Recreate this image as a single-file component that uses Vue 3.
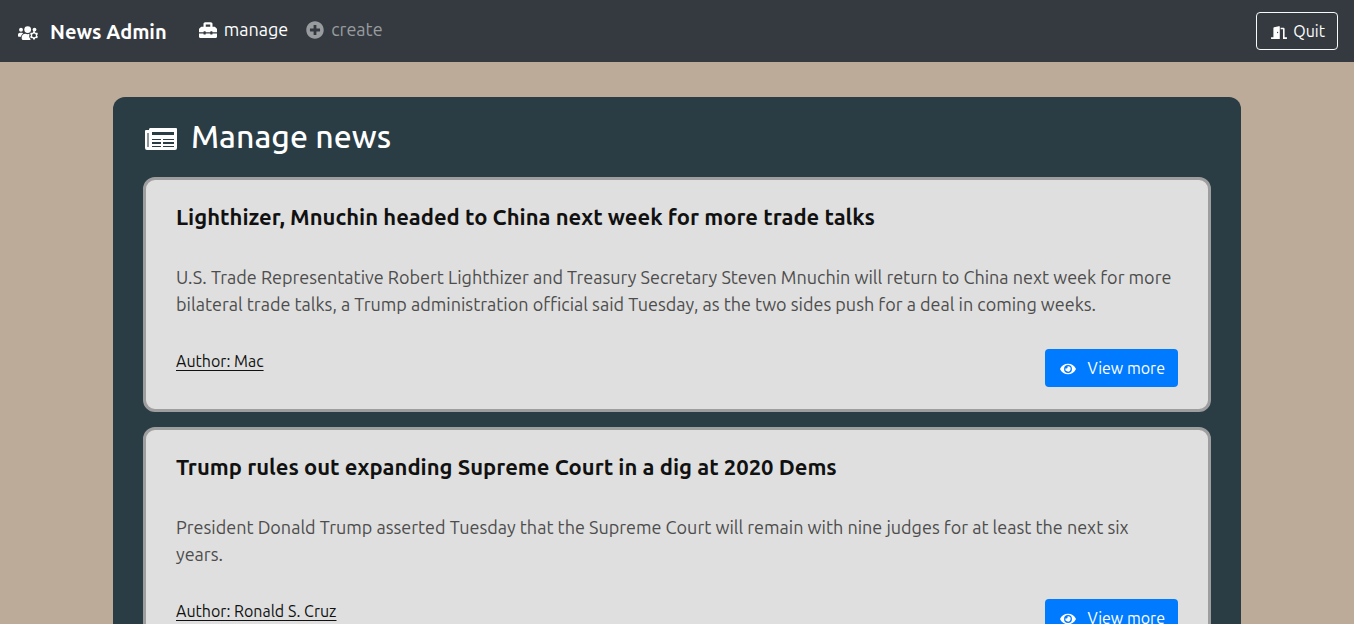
<script setup>
const articles = [
  {
    id: 1,
    title: 'Lighthizer, Mnuchin headed to China next week for more trade talks',
    text: 'U.S. Trade Representative Robert Lighthizer and Treasury Secretary Steven Mnuchin will return to China next week for more bilateral trade talks, a Trump administration official said Tuesday, as the two sides push for a deal in coming weeks.',
    author: 'Mac',
  },
  {
    id: 2,
    title: 'Trump rules out expanding Supreme Court in a dig at 2020 Dems',
    text: 'President Donald Trump asserted Tuesday that the Supreme Court will remain with nine judges for at least the next six years.',
    author: 'Ronald S. Cruz',
  },
]
</script>

<template>
  <div class="page">
    <header class="navbar">
      <a class="brand" href="#">
        <svg class="icon-users" viewBox="0 0 640 448" aria-hidden="true">
          <circle cx="96" cy="120" r="62" />
          <circle cx="310" cy="112" r="108" />
          <circle cx="528" cy="112" r="60" />
          <path d="M64 216h64c18 0 34 7 45 19-40 22-69 62-75 109H32c-18 0-32-14-32-32v-32c0-35 29-64 64-64z" />
          <path d="M233 250h8c42 20 86 20 128 0l-6 40-4 60 30 60 14 38H166c-26 0-48-22-48-48v-35c0-64 51-115 115-115z" />
          <path fill-rule="evenodd" d="M484 170h56l10 38 24 12 38-12 26 46-26 30v32l26 30-26 46-38-12-24 12-10 38h-56l-10-38-24-12-38 12-26-46 26-30v-32l-26-30 26-46 38 12 24-12zM512 238a62 62 0 1 0 0 124 62 62 0 1 0 0-124z" />
        </svg>
        <span>News Admin</span>
      </a>
      <nav class="links">
        <a class="link active" href="#manage">
          <svg class="icon-nav" viewBox="0 0 512 512" aria-hidden="true"><path d="M502.63 214.63l-45.25-45.25c-6-6-14.14-9.37-22.63-9.37H384V80c0-26.51-21.49-48-48-48H176c-26.51 0-48 21.49-48 48v80H77.25c-8.49 0-16.62 3.37-22.63 9.37L9.37 214.63c-6 6-9.37 14.14-9.37 22.63V320h128v-16c0-8.84 7.16-16 16-16h32c8.84 0 16 7.16 16 16v16h128v-16c0-8.84 7.16-16 16-16h32c8.84 0 16 7.16 16 16v16h128v-82.75c0-8.48-3.37-16.62-9.37-22.62zM320 160H192V96h128v64zm64 208c0 8.84-7.16 16-16 16h-32c-8.84 0-16-7.16-16-16v-16H192v16c0 8.84-7.16 16-16 16h-32c-8.84 0-16-7.16-16-16v-16H0v96c0 17.67 14.33 32 32 32h448c17.67 0 32-14.33 32-32v-96H384v16z" /></svg>
          <span>manage</span>
        </a>
        <a class="link" href="#create">
          <svg class="icon-nav" viewBox="0 0 512 512" aria-hidden="true"><path d="M256 8C119 8 8 119 8 256s111 248 248 248 248-111 248-248S393 8 256 8zm144 276c0 6.6-5.4 12-12 12h-92v92c0 6.6-5.4 12-12 12h-56c-6.6 0-12-5.4-12-12v-92h-92c-6.6 0-12-5.4-12-12v-56c0-6.6 5.4-12 12-12h92v-92c0-6.6 5.4-12 12-12h56c6.6 0 12 5.4 12 12v92h92c6.6 0 12 5.4 12 12v56z" /></svg>
          <span>create</span>
        </a>
      </nav>
      <button class="quit" type="button">
        <svg class="icon-door" viewBox="0 0 640 512" aria-hidden="true"><path d="M624 448h-80V113.45C544 86.19 522.47 64 496 64H384v64h96v384h144c8.84 0 16-7.16 16-16v-32c0-8.84-7.16-16-16-16zM312.24 1.01l-192 49.74C105.99 54.44 96 67.7 96 82.92V448H16c-8.84 0-16 7.16-16 16v32c0 8.84 7.16 16 16 16h336V33.18c0-21.58-19.56-37.41-39.76-32.17zM264 288c-13.25 0-24-14.33-24-32s10.75-32 24-32 24 14.33 24 32-10.75 32-24 32z" /></svg>
        <span>Quit</span>
      </button>
    </header>

    <main class="panel">
      <h1 class="heading">
        <svg class="icon-news" viewBox="0 0 32 24" aria-hidden="true">
          <path fill-rule="evenodd" d="M5 2h26a1 1 0 0 1 1 1v19a2 2 0 0 1-2 2H2a2 2 0 0 1-2-2V5a1 1 0 0 1 1-1h3a2 2 0 0 1 1-2zM7 6v3h22V6z" />
          <path class="slot" d="M7 13h9v1H7zM18 13h11v1H18zM7 16h9v2H7zM18 16h11v2H18zM7 20h9v1H7zM18 20h11v1H18z" />
          <path class="fold" d="M2 7h2v14H2z" />
        </svg>
        <span>Manage news</span>
      </h1>

      <article v-for="item in articles" :key="item.id" class="card">
        <h2 class="title">{{ item.title }}</h2>
        <p class="text">{{ item.text }}</p>
        <div class="footer">
          <span class="author">Author: {{ item.author }}</span>
          <button class="view" type="button">
            <svg class="icon-eye" viewBox="0 0 576 512" aria-hidden="true"><path d="M572.52 241.4C518.29 135.59 410.93 64 288 64S57.68 135.64 3.48 241.41a32.35 32.35 0 0 0 0 29.19C57.71 376.41 165.07 448 288 448s230.32-71.64 284.52-177.41a32.35 32.35 0 0 0 0-29.19zM288 400a144 144 0 1 1 144-144 143.93 143.93 0 0 1-144 144zm0-240a95.31 95.31 0 0 0-25.31 3.79 47.85 47.85 0 0 1-66.9 66.9A95.78 95.78 0 1 0 288 160z" /></svg>
            <span>View more</span>
          </button>
        </div>
      </article>
    </main>
  </div>
</template>

<style>
body {
  margin: 0;
  background: #bcab99;
}
html {
  scrollbar-width: none;
}
</style>

<style scoped>
.page {
  font-family: Ubuntu, "Noto Sans", sans-serif;
  font-size: 16px;
  line-height: 24px;
}
.page * {
  box-sizing: border-box;
}
svg {
  fill: currentColor;
  flex: none;
}
.navbar {
  display: flex;
  align-items: center;
  height: 62px;
  padding: 0 16px;
  background: #343a40;
  color: #fff;
}
.brand {
  display: flex;
  align-items: center;
  gap: 12px;
  margin-right: 32px;
  padding: 2px 0 0 2px;
  color: #fff;
  font-size: 20px;
  font-weight: 700;
  text-decoration: none;
}
.icon-users {
  width: 20px;
  height: 14px;
  margin-top: 2px;
}
.links {
  display: flex;
  gap: 18px;
  padding-bottom: 4px;
}
.link {
  display: flex;
  align-items: center;
  gap: 7px;
  color: #999c9f;
  font-size: 18px;
  text-decoration: none;
}
.link.active {
  color: #fff;
}
.icon-nav {
  width: 18px;
  height: 18px;
  margin-top: 2px;
}
.quit,
.view {
  display: flex;
  align-items: center;
  height: 38px;
  border-radius: 4px;
  color: #fff;
  font: inherit;
  white-space: nowrap;
}
.quit {
  gap: 6px;
  margin-left: auto;
  padding: 0 12px 0 14px;
  border: 1px solid #f8f9fa;
  background: transparent;
}
.icon-door {
  width: 16px;
  height: 13px;
  margin-top: 2px;
}
.panel {
  max-width: 1128px;
  margin: 35px auto;
  padding: 20px 30px 30px;
  border-radius: 12px;
  background: #2a3c44;
}
.heading {
  display: flex;
  align-items: center;
  gap: 14px;
  margin: 0 0 22px;
  padding-left: 2px;
  color: #fff;
  font-size: 32px;
  font-weight: 500;
  line-height: 38px;
}
.icon-news {
  width: 32px;
  height: 24px;
  margin-top: 4px;
}
.slot {
  fill: #2a3c44;
}
.fold {
  fill: #8e979b;
}
.card {
  margin-bottom: 15px;
  padding: 20px 30px 22px;
  border: 3px solid #9e9e9e;
  border-radius: 12px;
  background: #dfdfdf;
}
.title {
  margin: 0 0 30px;
  color: #111;
  font-size: 22px;
  font-weight: 700;
  line-height: 34px;
}
.text {
  margin: 0 0 31px;
  color: #4d4d4d;
  font-size: 18px;
  line-height: 27px;
}
.footer {
  display: flex;
  justify-content: space-between;
  align-items: flex-start;
}
.author {
  color: #111;
  text-decoration: underline;
  text-underline-offset: 3px;
}
.view {
  gap: 11px;
  padding: 0 13px 0 15px;
  border: 0;
  background: #007bff;
}
.icon-eye {
  width: 16px;
  height: 14px;
  margin-top: 2px;
}
</style>
